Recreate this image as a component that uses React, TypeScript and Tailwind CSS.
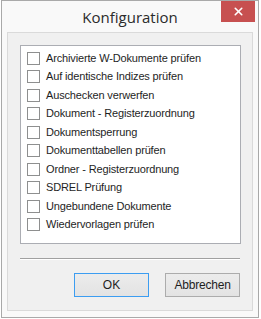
import { X } from "lucide-react";

const items = [
  "Archivierte W-Dokumente prüfen",
  "Auf identische Indizes prüfen",
  "Auschecken verwerfen",
  "Dokument - Registerzuordnung",
  "Dokumentsperrung",
  "Dokumenttabellen prüfen",
  "Ordner - Registerzuordnung",
  "SDREL Prüfung",
  "Ungebundene Dokumente",
  "Wiedervorlagen prüfen",
];

export default function App() {
  return (
    <div className="w-[261px] h-[319px] bg-white pl-[1px] font-['Liberation_Sans',Arial,sans-serif] text-[#1e1e1e]">
      <div className="w-[258px] h-[318px] border border-[#a9a9a9] bg-[#f9f9f9] flex flex-col">
        {/* title bar */}
        <div className="relative h-[31px] flex items-center justify-center">
          <span className="font-['Open_Sans',sans-serif] text-[15px] text-[#2b2b2b] mt-[1px]">Konfiguration</span>
          <div className="absolute top-0 right-[3px] w-[34px] h-[21px] bg-[#c75050] flex items-center justify-center">
            <X className="w-[13px] h-[13px] text-white" strokeWidth={3} />
          </div>
        </div>

        {/* client area */}
        <div className="mx-[5px] h-[279px] border border-[#dadada] bg-[#f0f0f0] px-[12px] pt-[12px]">
          <div className="w-[221px] h-[199px] border border-[#abadb3] bg-white pt-[3px] pl-[6px]">
            {items.map((item) => (
              <div key={item} className="h-[18.5px] flex items-center gap-[6px]">
                <div className="w-[13px] h-[13px] border border-[#8e8f8f] bg-white shrink-0" />
                <span className="text-[11px] tracking-[-0.15px] leading-none whitespace-nowrap">{item}</span>
              </div>
            ))}
          </div>

          <div className="mt-[14px] w-[220px] border-t border-[#a0a0a0] border-b border-b-white" />

          <div className="mt-[13px] ml-[54px] flex gap-[16px]">
            <div className="w-[80px] h-[24px] border border-[#3c9df1] bg-gradient-to-b from-[#ececec] to-[#e3e3e3] flex items-center justify-center text-[12px]">
              OK
            </div>
            <div className="w-[80px] h-[24px] border border-[#acacac] bg-gradient-to-b from-[#ececec] to-[#e3e3e3] flex items-center justify-center text-[12px] tracking-[-0.2px]">
              Abbrechen
            </div>
          </div>
        </div>
      </div>
    </div>
  );
}
